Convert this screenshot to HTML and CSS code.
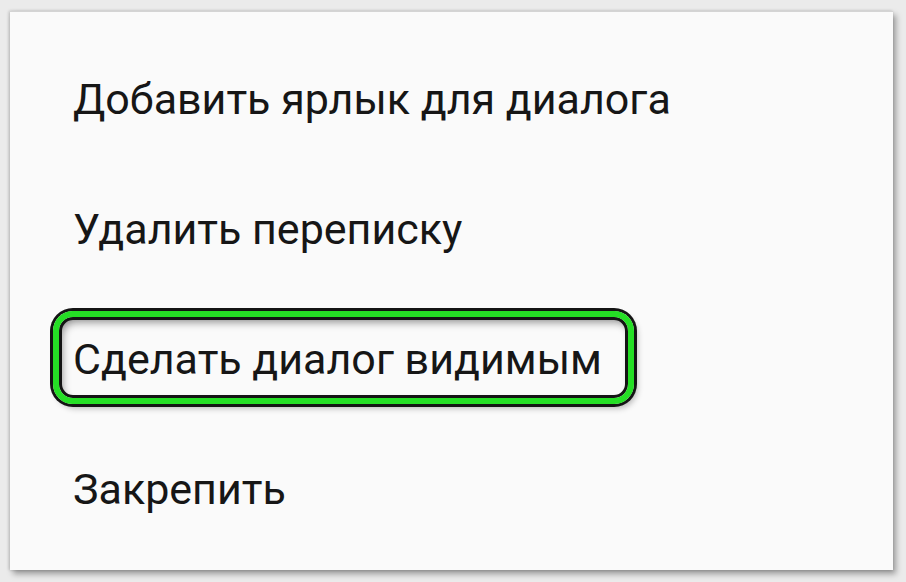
FILE: index.html
```html
<!DOCTYPE html>
<html>
<head>
    <meta charset="UTF-8">
    <meta name="viewport" content="width=device-width, initial-scale=1.0">
    <title>Меню диалога</title>
    <link rel="stylesheet" href="styles.css">
</head>
<body>
    <div class="menu">
        <div class="menuItem">Добавить ярлык для диалога</div>
        <div class="menuItem">Удалить переписку</div>
        <div class="menuItem marked">Сделать диалог видимым</div>
        <div class="menuItem">Закрепить</div>
    </div>
</body>
</html>
```

FILE: styles.css
```css
body {
    margin: 0;
    background: #ebebeb;
    font-family: Roboto, "Liberation Sans", sans-serif;
}

.menu {
    margin: 11px 13px 12px 10px;
    height: 559px;
    box-sizing: border-box;
    padding: 22px 0 0 63px;
    background: #fafafa;
    border-top: 1px solid #d4d4d4;
    box-shadow: 3px 4px 6px rgba(0, 0, 0, 0.35), -1px 0 3px rgba(0, 0, 0, 0.2);
}

.menuItem {
    position: relative;
    height: 130px;
    line-height: 130px;
    font-size: 43px;
    color: #161616;
    white-space: nowrap;
}

/* green highlight drawn over the third row */
.marked::before {
    content: "";
    position: absolute;
    left: -20px;
    top: 17px;
    width: 569px;
    height: 81px;
    border: 6px solid #25df25;
    border-radius: 20px;
    box-shadow: 0 0 0 3px #141414, inset 0 0 0 3px #141414, inset 3px 5px 8px rgba(0, 0, 0, 0.45), 3px 4px 6px rgba(0, 0, 0, 0.3);
}
```
